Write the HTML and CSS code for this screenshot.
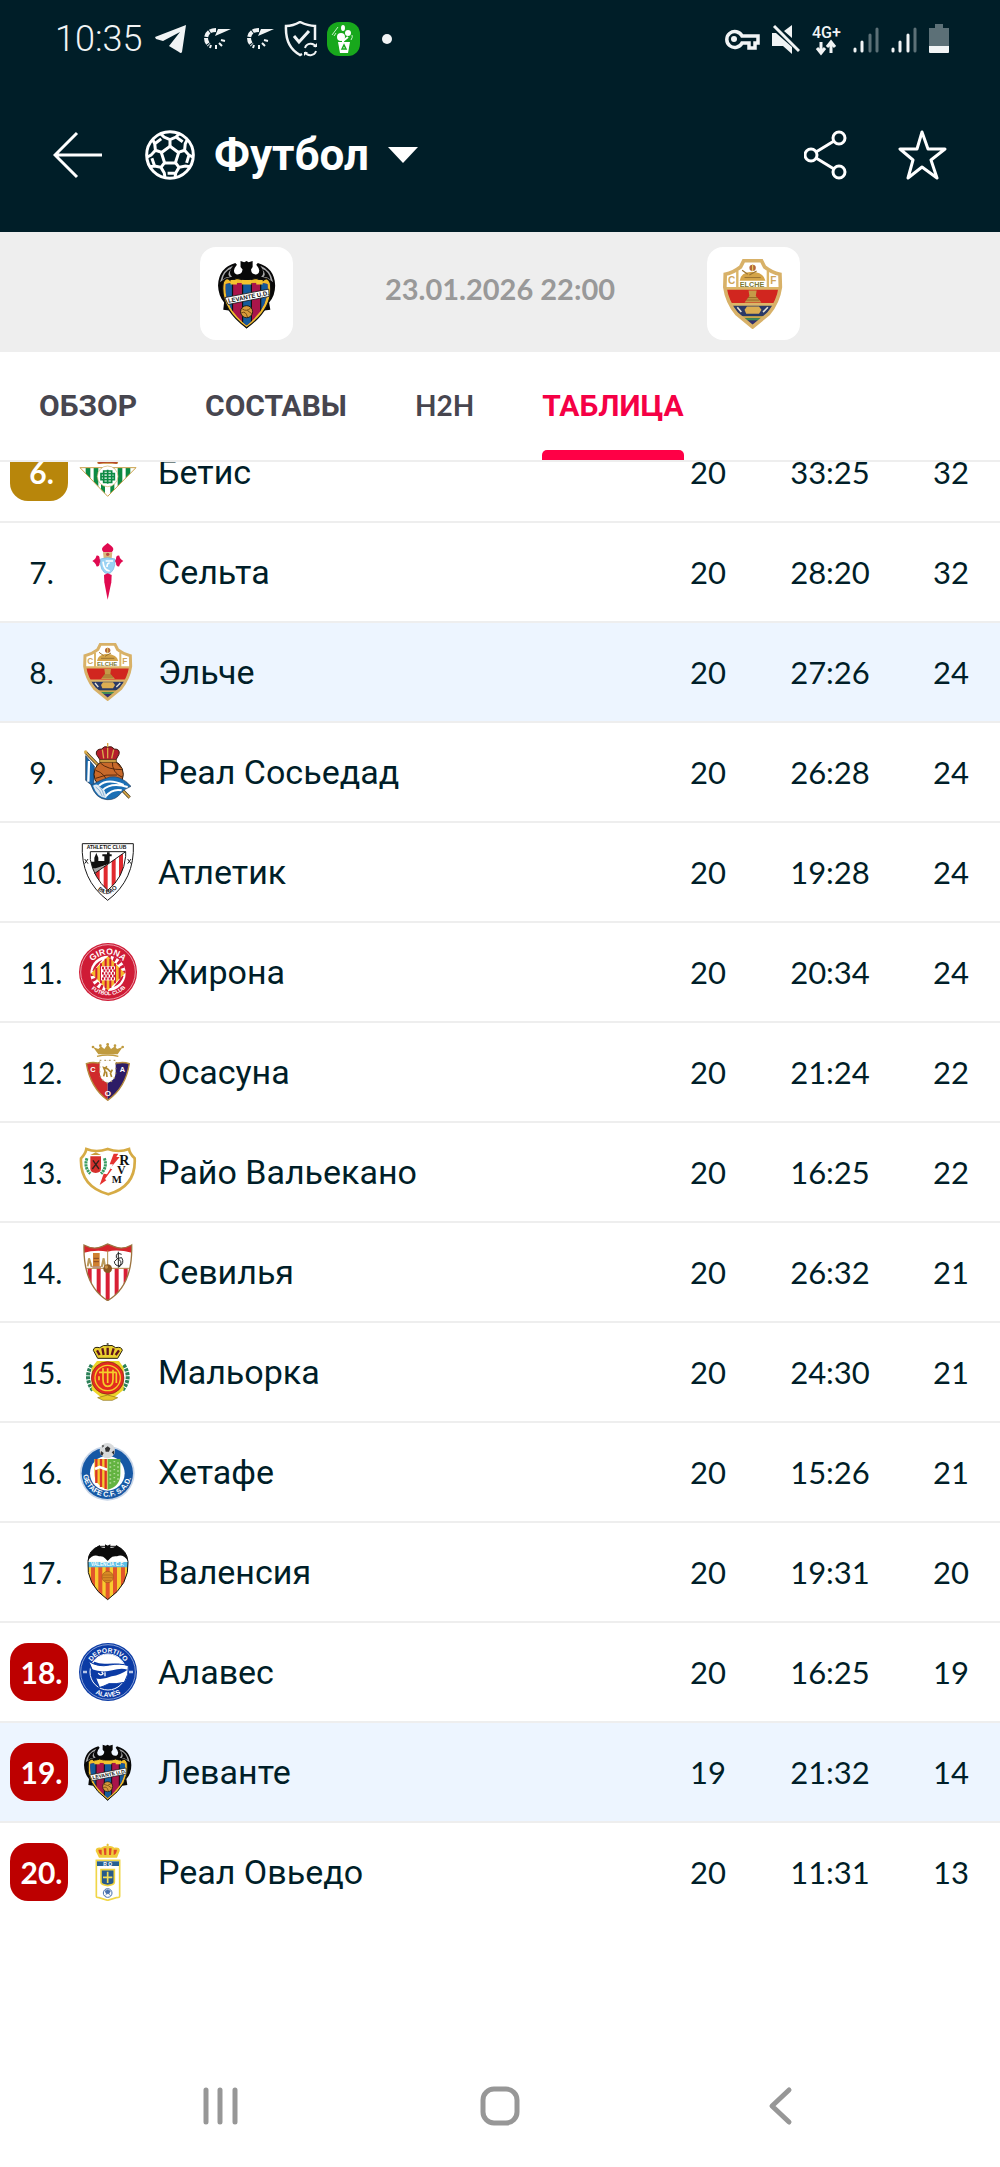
FILE: index.html
```html
<!DOCTYPE html>
<html lang="ru">
  <head>
    <meta charset="UTF-8">
    <meta name="viewport" content="width=device-width, initial-scale=1.0">
    <title>Леванте - Эльче: таблица</title>
    <link rel="stylesheet" href="styles.css">
  </head>
  <body>
    <header class="top">
      <div class="status">
        <span class="clock">10:35</span>
        <div class="notifications">
          <svg viewBox="0 0 33 36"><path d="M0 16L31 4L27 31Q26 33 24 31L14 25L25 11L8 20L1 18Z" fill="#f1f4f5"/></svg>
          <svg viewBox="0 0 33 36"><path d="M18 9Q9 9 8 17Q8 21 11 24" fill="none" stroke="#f1f4f5" stroke-width="4" stroke-dasharray="6 1"/><path d="M17 15L20 8H33L24 12Z" fill="#f1f4f5"/><path d="M13 24L12 27M18 24V28M21 22L24 25M23 19L27 20" stroke="#f1f4f5" stroke-width="2"/></svg>
          <svg viewBox="0 0 33 36"><path d="M18 9Q9 9 8 17Q8 21 11 24" fill="none" stroke="#f1f4f5" stroke-width="4" stroke-dasharray="6 1"/><path d="M17 15L20 8H33L24 12Z" fill="#f1f4f5"/><path d="M13 24L12 27M18 24V28M21 22L24 25M23 19L27 20" stroke="#f1f4f5" stroke-width="2"/></svg>
          <svg viewBox="0 0 33 36"><path d="M18 33L16 34Q1 26 2 5Q9 5 16 1Q24 5 31 5V19" fill="none" stroke="#f1f4f5" stroke-width="2.5"/><path d="M10 15L15 21L25 10" fill="none" stroke="#f1f4f5" stroke-width="3"/><path d="M21 27A6 6 0 0 1 32 26M32 30A6 6 0 0 1 21 31" fill="none" stroke="#f1f4f5" stroke-width="2"/><path d="M29 26H33V22ZM24 31H20V35Z" fill="#f1f4f5"/></svg>
          <svg viewBox="0 0 33 36"><rect y="1" width="33" height="34" rx="12" fill="#18a81c"/><path d="M11 21H23L21 32H13Z" fill="#fff"/><path d="M16 22V14M16 20L21 16" stroke="#fff" stroke-width="2"/><circle cx="14" cy="16" r="4" fill="#fff"/><circle cx="21" cy="12" r="3" fill="#fff"/><ellipse cx="16" cy="7" rx="2" ry="3" fill="#fff"/><path d="M5 14L11 6M7 15L9 12M24 19Q26 16 25 14" fill="none" stroke="#c9f2c9" stroke-width="1"/><path d="M15 28L17 24L19 28Z" fill="none" stroke="#18a81c" stroke-width="1.5"/></svg>
          <svg viewBox="0 0 33 36"><circle cx="17" cy="18" r="5" fill="#f1f4f5"/></svg>
        </div>
        <div class="system">
          <svg width="35" height="36" viewBox="0 0 35 36"><path d="M17 15H33V22H30V27H24V22H17A8 8 0 1 1 17 15Z" fill="none" stroke="#f1f4f5" stroke-width="3.5"/><circle cx="9" cy="18" r="3" fill="#f1f4f5"/></svg>
          <svg width="28" height="36" viewBox="0 0 28 36"><path d="M0 12H4L20 26V33L11 25H0ZM20 4V17L12 10Z" fill="#f1f4f5"/><path d="M2 5L27 30" stroke="#f1f4f5" stroke-width="3"/></svg>
          <svg width="29" height="36" viewBox="0 0 29 36"><text class="net" x="0" y="17">4G+</text><path d="M9 21V31M5 27L9 32L13 27M19 32V22M15 26L19 21L23 26" fill="none" stroke="#f1f4f5" stroke-width="3"/></svg>
          <svg width="26" height="36" viewBox="0 0 26 36"><path d="M2 28V30M9 21V30" stroke="#f1f4f5" stroke-width="3" stroke-linecap="round"/><path d="M17 14V30M24 8V30" stroke="#5c7077" stroke-width="3" stroke-linecap="round"/></svg>
          <svg width="26" height="36" viewBox="0 0 26 36"><path d="M2 28V30M9 21V30M17 14V30" stroke="#f1f4f5" stroke-width="3" stroke-linecap="round"/><path d="M24 8V30" stroke="#5c7077" stroke-width="3" stroke-linecap="round"/></svg>
          <svg width="20" height="36" viewBox="0 0 20 36"><path d="M6 3H14V7H20V26H0V7H6Z" fill="#5c7077"/><path d="M0 25H20V31Q20 32 19 32H1Q0 32 0 31Z" fill="#f1f4f5"/></svg>
        </div>
      </div>

      <div class="app-bar">
        <button class="icon-btn" type="button" aria-label="Назад">
          <svg width="49" height="50" viewBox="0 0 49 50"><path d="M49 25H2M24 3L2 25L24 47" fill="none" stroke="#fff" stroke-width="3"/></svg>
        </button>
        <button class="sport" type="button">
          <svg width="50" height="50" viewBox="-75 -75 150 150">
            <g fill="none" stroke="#fff" stroke-width="9">
              <circle r="70"/>
              <path d="M0 -26L26 -7L16 24H-16L-26 -7Z"/>
              <path d="M0 -26V-46M-28 -64L-18 -54L0 -46L18 -54L28 -64M18 -54L38 -40"/>
              <path d="M0 -26V-46M-28 -64L-18 -54L0 -46L18 -54L28 -64M18 -54L38 -40" transform="rotate(72)"/>
              <path d="M0 -26V-46M-28 -64L-18 -54L0 -46L18 -54L28 -64M18 -54L38 -40" transform="rotate(144)"/>
              <path d="M0 -26V-46M-28 -64L-18 -54L0 -46L18 -54L28 -64M18 -54L38 -40" transform="rotate(216)"/>
              <path d="M0 -26V-46M-28 -64L-18 -54L0 -46L18 -54L28 -64M18 -54L38 -40" transform="rotate(288)"/>
            </g>
          </svg>
          <span>Футбол</span>
          <svg width="30" height="16" viewBox="0 0 30 16"><path d="M0 0H30L15 16Z" fill="#fff"/></svg>
        </button>
        <div class="actions">
          <button class="icon-btn" type="button" aria-label="Поделиться">
            <svg width="43" height="50" viewBox="0 0 43 50"><g fill="none" stroke="#fff" stroke-width="3"><circle cx="7" cy="25" r="6"/><circle cx="35" cy="8" r="6"/><circle cx="35" cy="42" r="6"/><path d="M12 22L30 11M12 28L30 39"/></g></svg>
          </button>
          <button class="icon-btn" type="button" aria-label="В избранное">
            <svg width="49" height="50" viewBox="0 0 49 50"><path d="M24 2L30 19H47L33 30L39 48L24 37L10 48L15 30L2 19H19Z" fill="none" stroke="#fff" stroke-width="3" stroke-linejoin="round"/></svg>
          </button>
        </div>
      </div>
    </header>

    <section class="match">
      <a class="team-box" href="#" aria-label="Леванте">
        <svg viewBox="0 0 174 174">
          <g id="levante">
            <clipPath id="lev-clip"><path d="M34 62Q60 56 86 62Q112 56 138 62Q144 120 86 165Q28 120 34 62Z"/></clipPath>
            <path d="M58 10Q16 22 15 66Q16 92 30 108L28 126L42 128L86 173L130 128L145 126L142 108Q157 92 157 66Q156 22 114 10L110 14Q124 30 112 38Q98 40 97 26L101 20L101 5L91 8L86 5L80 8L71 5L71 20L76 26Q74 40 60 38Q48 30 62 14Z" fill="#080808"/>
            <path d="M20 58Q26 26 52 17Q38 34 50 44Q32 46 20 58ZM152 58Q146 26 120 17Q134 34 122 44Q140 46 152 58Z" fill="#a9a9ab"/>
            <path d="M26 52Q30 30 48 24Q36 38 44 44Q34 44 26 52ZM146 52Q142 30 124 24Q136 38 128 44Q138 44 146 52Z" fill="#080808"/>
            <path d="M28 58Q36 42 46 54L62 48L86 54L110 48L126 54Q138 42 145 60Q154 122 86 171Q18 122 28 58Z" fill="#f0bd2c" stroke="#111" stroke-width="3"/>
            <g clip-path="url(#lev-clip)">
              <rect x="20" y="50" width="130" height="120" fill="#a9154a"/>
              <path d="M20 50h31v120H20zM76 50h22v120H76zM121 50h30v120h-30z" fill="#145b9c"/>
              <path d="M51 50v120M76 50v120M98 50v120M121 50v120" stroke="#111" stroke-width="3"/>
            </g>
            <path d="M46 58H62M74 58H98M110 58H126" stroke="#f5c32f" stroke-width="11"/>
            <path d="M32 96L141 75L142 93L40 113Z" fill="#fff" stroke="#111" stroke-width="2"/>
            <text class="crest-text" x="41" y="109" font-size="15" transform="rotate(-11 41 109)">LEVANTE U.D.</text>
            <circle cx="86" cy="131" r="15" fill="#d79a3b" stroke="#111" stroke-width="2"/>
            <path d="M75 124Q86 132 96 122M73 134Q84 128 88 144M88 128L99 136" fill="none" stroke="#5c3909" stroke-width="2"/>
          </g>
        </svg>
      </a>
      <time datetime="2026-01-23T22:00">23.01.2026 22:00</time>
      <a class="team-box" href="#" aria-label="Эльче">
        <svg viewBox="0 0 174 174">
          <g id="elche">
            <clipPath id="elc-clip"><path d="M20 74H152Q146 108 122 136L86 170L50 136Q26 108 20 74Z"/></clipPath>
            <path d="M64 4H108L116 20Q134 34 154 38L155 70Q150 106 126 136L86 169L46 136Q22 106 17 70L18 38Q38 34 56 20Z" fill="#fff"/>
            <g clip-path="url(#elc-clip)">
              <rect y="70" width="174" height="42" fill="#d1261f"/>
              <rect y="112" width="174" height="60" fill="#2b3a66"/>
              <rect y="142" width="174" height="5" fill="#c9a849"/>
              <rect y="147" width="174" height="6" fill="#3e8b56"/>
              <rect y="153" width="174" height="20" fill="#33306e"/>
              <path d="M66 108L78 92L76 78H96L94 92L108 108Z" fill="#c59a48"/>
              <path d="M74 96H98M70 102H102" stroke="#8b5a1f" stroke-width="2"/>
              <path d="M66 126L72 118H102L108 126L102 136H70Z" fill="#dcae52"/>
              <path d="M48 120L58 132M124 120L112 132" stroke="#e5e1d5" stroke-width="4"/>
            </g>
            <path d="M18 73H154M32 113H140" stroke="#dcb668" stroke-width="7"/>
            <path d="M48 30V72M124 30V72" stroke="#dcb668" stroke-width="6"/>
            <path d="M54 54Q56 34 84 32Q114 34 118 54Z" fill="#d4a449"/>
            <path d="M60 28L74 38M78 40L96 30M66 46H106" stroke="#9c7432" stroke-width="3"/>
            <circle cx="86" cy="22" r="8" fill="#b5673a"/>
            <path d="M86 14V30" stroke="#e4c75d" stroke-width="3"/>
            <text class="crest-text olive" x="54" y="69" font-size="18">ELCHE</text>
            <text class="crest-text gold" x="25" y="63" font-size="25">C</text>
            <text class="crest-text gold" x="130" y="63" font-size="25">F</text>
            <path d="M64 4H108L116 20Q134 34 154 38L155 70Q150 106 126 136L86 169L46 136Q22 106 17 70L18 38Q38 34 56 20Z" fill="none" stroke="#d8b168" stroke-width="9"/>
          </g>
        </svg>
      </a>
    </section>

    <nav class="tabs">
      <a href="#">ОБЗОР</a>
      <a href="#">СОСТАВЫ</a>
      <a class="latin" href="#">H2H</a>
      <a class="active" href="#" aria-current="page">ТАБЛИЦА</a>
    </nav>

    <main class="standings">
      <table>
        <tbody>
          <tr>
            <td class="rank"><span class="badge europe">6.</span></td>
            <td class="crest">
              <svg viewBox="0 0 174 174">
                <clipPath id="bet-clip"><path d="M3 74H171L86 160Z"/></clipPath>
                <path d="M56 62L48 36L66 44L86 24L106 44L124 36L116 62Z" fill="#c98a2b"/>
                <path d="M58 60Q86 52 114 60" fill="none" stroke="#b5482a" stroke-width="6"/>
                <g clip-path="url(#bet-clip)">
                  <path d="M0 70H174V162H0Z" fill="#fff"/>
                  <path d="M20 70h14v90H20zM44 70h14v90H44zM66 70h12v90H66zM94 70h12v90H94zM116 70h14v90h-14zM140 70h14v90h-14z" fill="#0b8a43"/>
                </g>
                <path d="M3 74H171L86 160Z" fill="none" stroke="#c9a04a" stroke-width="3"/>
                <circle cx="86" cy="100" r="31" fill="#fff" stroke="#cdb06a" stroke-width="2"/>
                <path d="M74 84H98V118H74ZM66 92H106V110H66ZM66 101H106M86 80V122" fill="none" stroke="#0b8a43" stroke-width="5"/>
              </svg>
            </td>
            <td class="name">Бетис</td>
            <td class="games">20</td>
            <td class="goals">33:25</td>
            <td class="points">32</td>
          </tr>
          <tr>
            <td class="rank"><span class="badge">7.</span></td>
            <td class="crest">
              <svg viewBox="0 0 174 174">
                <path d="M86 0L98 10Q108 18 98 28H74Q64 18 74 10Z" fill="#e00a50"/>
                <path d="M40 54Q52 46 52 38Q62 36 62 48L66 54L62 60Q62 72 52 70Q52 62 40 54ZM133 54Q121 46 121 38Q111 36 111 48L107 54L111 60Q111 72 121 70Q121 62 133 54Z" fill="#e00a50"/>
                <path d="M72 28H100L98 46H74Z" fill="#d9b77a"/><circle cx="86" cy="34" r="5" fill="#b8483c"/>
                <path d="M64 48Q86 40 108 48Q110 86 86 94Q62 86 64 48Z" fill="#9ad2f4" stroke="#72b5e0" stroke-width="2"/>
                <path d="M72 56Q74 82 92 84M80 54H102M92 60Q84 60 84 72" fill="none" stroke="#fff" stroke-width="5"/>
                <path d="M75 96L86 91L98 96L97 118L86 170L76 118Z" fill="#e00a50"/>
              </svg>
            </td>
            <td class="name">Сельта</td>
            <td class="games">20</td>
            <td class="goals">28:20</td>
            <td class="points">32</td>
          </tr>
          <tr class="current">
            <td class="rank"><span class="badge">8.</span></td>
            <td class="crest"><svg viewBox="0 0 174 174"><use href="#elche"/></svg></td>
            <td class="name">Эльче</td>
            <td class="games">20</td>
            <td class="goals">27:26</td>
            <td class="points">24</td>
          </tr>
          <tr>
            <td class="rank"><span class="badge">9.</span></td>
            <td class="crest">
              <svg viewBox="0 0 174 174">
                <path d="M20 28L152 164" stroke="#3c2c10" stroke-width="9"/>
                <path d="M20 28L152 164" stroke="#d9aa4a" stroke-width="5"/>
                <circle cx="20" cy="27" r="5" fill="#d9aa4a"/>
                <path d="M20 38L46 70L44 132L20 112Z" fill="#1768ae" stroke="#1a2a44" stroke-width="2"/>
                <path d="M30 54L28 116" stroke="#fff" stroke-width="7"/>
                <circle cx="89" cy="94" r="44" fill="#c8692a" stroke="#2c1a0c" stroke-width="3"/>
                <path d="M50 82Q80 90 92 132M64 60Q84 80 130 80M100 54Q98 90 132 104M50 106Q80 92 114 96M112 58L126 74" fill="none" stroke="#5b2a0e" stroke-width="3"/>
                <path d="M64 52L52 34Q50 18 68 18Q76 8 86 12Q98 8 106 18Q124 18 120 34L110 52Z" fill="#b41e2c" stroke="#3c1a10" stroke-width="3"/>
                <path d="M86 0V12M70 20L74 46M86 14V46M104 20L98 46" stroke="#d9aa4a" stroke-width="4"/>
                <path d="M62 50H112V58H62Z" fill="#d9aa4a" stroke="#3c2c10" stroke-width="2"/>
                <path d="M36 126Q62 112 92 102Q126 96 156 130Q136 138 126 150Q110 172 84 170Q50 168 36 126Z" fill="#1b6fb5" stroke="#27405e" stroke-width="2"/>
                <path d="M60 128Q86 104 134 126M70 142Q96 116 146 132M80 160Q100 136 128 142" fill="none" stroke="#fff" stroke-width="6"/>
                <path d="M42 128Q56 118 66 134Q82 140 82 166Q54 162 42 128Z" fill="#dfeaf3"/>
                <path d="M50 132Q62 138 70 160M60 128Q72 142 76 160" fill="none" stroke="#5f93c3" stroke-width="2"/>
              </svg>
            </td>
            <td class="name">Реал Сосьедад</td>
            <td class="games">20</td>
            <td class="goals">26:28</td>
            <td class="points">24</td>
          </tr>
          <tr>
            <td class="rank"><span class="badge">10.</span></td>
            <td class="crest">
              <svg viewBox="0 0 174 174">
                <clipPath id="ath-clip"><path d="M34 26H140V40Q134 104 86 142Q44 104 34 50Z"/></clipPath>
                <path d="M10 2H163Q168 110 86 172Q4 110 10 2Z" fill="#fff" stroke="#1a1a1a" stroke-width="3"/>
                <g clip-path="url(#ath-clip)">
                  <path d="M30 70H90L46 92Z" fill="#a5a5a5"/>
                  <path d="M36 56H46V44L52 30L58 44V54H76V40H70V34H84V28H92V34H98V40H92V62L50 76H36Z" fill="#111"/>
                  <path d="M140 26L44 92L60 150H150Z" fill="#fff"/>
                  <path d="M50 88L62 80V130H50ZM74 72L86 64V150H74ZM98 55L110 47V130H98ZM120 40L132 32V120H120Z" fill="#e02a2f"/>
                </g>
                <path d="M34 26H140V40Q134 104 86 142Q44 104 34 50ZM140 26L46 92" fill="none" stroke="#1a1a1a" stroke-width="3"/>
                <path d="M17 48L27 62M27 48L17 62M146 48L156 62M156 48L146 62" stroke="#222" stroke-width="3"/>
                <text class="crest-text" x="23" y="19" font-size="15">ATHLETIC CLUB</text>
                <path id="ath-arc" d="M44 126Q86 186 132 112" fill="none"/>
                <text class="crest-text" font-size="18"><textPath href="#ath-arc" startOffset="18">BILBAO</textPath></text>
              </svg>
            </td>
            <td class="name">Атлетик</td>
            <td class="games">20</td>
            <td class="goals">19:28</td>
            <td class="points">24</td>
          </tr>
          <tr>
            <td class="rank"><span class="badge">11.</span></td>
            <td class="crest">
              <svg viewBox="0 0 174 174">
                <circle cx="87" cy="87" r="87" fill="#cf1b36"/>
                <circle cx="87" cy="87" r="82" fill="none" stroke="#f7dfe2" stroke-width="2"/>
                <circle cx="87" cy="91" r="53" fill="#fff"/>
                <path d="M87 45A46 46 0 0 1 133 91" fill="none" stroke="#cf1b36" stroke-width="14" stroke-dasharray="8 8"/>
                <path d="M87 137A46 46 0 0 1 41 91" fill="none" stroke="#cf1b36" stroke-width="14" stroke-dasharray="8 8"/>
                <path d="M40 84Q46 60 70 50L44 84ZM134 98Q128 122 104 132L130 98Z" fill="#cf1b36"/>
                <path d="M87 40L138 91L87 142L36 91Z" fill="#f6b62b"/>
                <path d="M52 75V107M66 61V121M80 47V135M94 47V135M108 61V121M122 75V107" stroke="#cf1b36" stroke-width="6"/>
                <rect x="66" y="70" width="42" height="42" fill="#fff"/>
                <path d="M69 75H108M73 83H108M69 91H108M73 99H108M69 107H108" stroke="#cf1b36" stroke-width="7" stroke-dasharray="6 4"/>
                <path id="gir-top" d="M33 66A62 62 0 0 1 141 66" fill="none"/>
                <path id="gir-bottom" d="M29 130A76 76 0 0 0 145 130" fill="none"/>
                <text class="crest-text white" font-size="26"><textPath href="#gir-top" startOffset="13">GIRONA</textPath></text>
                <text class="crest-text white" font-size="16"><textPath href="#gir-bottom" startOffset="11">FUTBOL CLUB</textPath></text>
              </svg>
            </td>
            <td class="name">Жирона</td>
            <td class="games">20</td>
            <td class="goals">20:34</td>
            <td class="points">24</td>
          </tr>
          <tr>
            <td class="rank"><span class="badge">12.</span></td>
            <td class="crest">
              <svg viewBox="0 0 174 174">
                <path d="M58 34L42 12L58 18L66 10L76 18L86 4L96 18L108 10L114 18L131 12L116 34Z" fill="#c09b3f"/>
                <path d="M54 40Q86 32 118 40" fill="none" stroke="#c09b3f" stroke-width="4"/>
                <g fill="#c09b3f"><circle cx="42" cy="12" r="4"/><circle cx="64" cy="8" r="4"/><circle cx="86" cy="4" r="4"/><circle cx="108" cy="8" r="4"/><circle cx="131" cy="12" r="4"/></g>
                <path d="M22 62Q40 56 56 60L86 54V172Q34 134 22 62Z" fill="#cf2a2c"/>
                <path d="M151 62Q134 56 116 60L86 54V172Q140 134 151 62Z" fill="#2d1c66"/>
                <path d="M22 62Q40 56 56 60L86 54L116 60Q134 56 151 62Q140 134 86 172Q34 134 22 62Z" fill="none" stroke="#b78c3e" stroke-width="4"/>
                <path d="M62 52H110V86Q110 112 86 120Q62 112 62 86Z" fill="#fff"/>
                <path d="M62 52H110V86Q110 112 86 120Q62 112 62 86Z" fill="none" stroke="#b5a06e" stroke-width="4" stroke-dasharray="5 9"/>
                <path d="M74 100L78 84L74 74L86 78L96 88L100 80M82 86L84 102M94 90L98 102M78 76L84 70" fill="none" stroke="#b0882e" stroke-width="5"/>
                <text class="crest-text white" x="34" y="88" font-size="22">C</text>
                <text class="crest-text white" x="122" y="88" font-size="22">A</text>
                <text class="crest-text white" x="77" y="159" font-size="24">O</text>
              </svg>
            </td>
            <td class="name">Осасуна</td>
            <td class="games">20</td>
            <td class="goals">21:24</td>
            <td class="points">22</td>
          </tr>
          <tr>
            <td class="rank"><span class="badge">13.</span></td>
            <td class="crest">
              <svg viewBox="0 0 174 174">
                <path d="M22 18Q52 30 86 18Q120 30 150 18Q152 32 167 46Q172 130 88 154Q2 130 6 46Q20 32 22 18Z" fill="#fff" stroke="#d6ab45" stroke-width="8"/>
                <path d="M24 46Q14 72 34 92M76 46Q86 72 66 92" fill="none" stroke="#379b60" stroke-width="9" stroke-dasharray="7 2"/>
                <path d="M34 40H66V78Q66 88 50 90Q34 88 34 78Z" fill="#d5302c"/>
                <path d="M40 78L60 52M42 52L60 78" stroke="#33221c" stroke-width="4"/>
                <path d="M34 36L50 28L66 36Z" fill="#c99d3d"/>
                <path d="M104 32L92 64L102 64L84 94L74 92L62 126L82 112L78 108L100 78L92 78L122 42L112 42L118 32Z" fill="#e5322f"/>
                <text class="crest-serif" x="121" y="66" font-size="42">R</text>
                <text class="crest-serif" x="114" y="92" font-size="36">V</text>
                <text class="crest-serif" x="98" y="120" font-size="32">M</text>
              </svg>
            </td>
            <td class="name">Райо Вальекано</td>
            <td class="games">20</td>
            <td class="goals">16:25</td>
            <td class="points">22</td>
          </tr>
          <tr>
            <td class="rank"><span class="badge">14.</span></td>
            <td class="crest">
              <svg viewBox="0 0 174 174">
                <clipPath id="sev-clip"><path d="M15 6Q44 22 70 10L86 3L104 10Q130 22 158 6Q162 128 86 173Q12 128 15 6Z"/></clipPath>
                <g clip-path="url(#sev-clip)">
                  <path d="M0 0H174V174H0Z" fill="#fff"/>
                  <path d="M0 0H174V34Q120 16 86 26Q44 18 0 34Z" fill="#d6252c"/>
                  <path d="M26 76h12v98H26zM53 76h12v98H53zM80 76h12v98H80zM107 76h12v98h-12zM134 76h12v98h-12z" fill="#d81f35"/>
                  <path d="M15 76H158M86 22V76" stroke="#b48b4d" stroke-width="3"/>
                </g>
                <path d="M15 6Q44 22 70 10L86 3L104 10Q130 22 158 6Q162 128 86 173Q12 128 15 6Z" fill="none" stroke="#9c7440" stroke-width="4"/>
                <path d="M42 30H62V70H42Z" fill="#cf8030"/>
                <path d="M26 70L30 46L38 72M68 72L74 46L78 70" fill="none" stroke="#bb9a5b" stroke-width="6"/>
                <path d="M44 46H60M44 56H60M40 72H66" stroke="#8b4923" stroke-width="3"/>
                <path d="M128 34Q110 26 112 44Q134 56 122 68Q108 70 106 56Q116 42 128 44Q138 60 120 72M118 26V74" fill="none" stroke="#242424" stroke-width="3"/>
                <circle cx="86" cy="77" r="13" fill="#8b5720"/><circle cx="82" cy="72" r="5" fill="#c69146"/>
              </svg>
            </td>
            <td class="name">Севилья</td>
            <td class="games">20</td>
            <td class="goals">26:32</td>
            <td class="points">21</td>
          </tr>
          <tr>
            <td class="rank"><span class="badge">15.</span></td>
            <td class="crest">
              <svg viewBox="0 0 174 174">
                <path d="M38 66Q14 104 42 142M134 66Q160 104 130 142" fill="none" stroke="#2b8158" stroke-width="12" stroke-dasharray="9 3"/>
                <path d="M54 54H120L134 74V140L110 160Q98 174 86 168Q74 176 62 160L38 140V74Z" fill="#ecd529"/>
                <path d="M56 164L86 156L116 164L100 172H72Z" fill="#e9c82a" stroke="#8e7318" stroke-width="2"/>
                <circle cx="86" cy="105" r="49" fill="#e32b20" stroke="#7a2c14" stroke-width="2"/>
                <circle cx="86" cy="105" r="38" fill="none" stroke="#f5cf28" stroke-width="4"/>
                <path d="M60 88H112M72 76V108Q72 130 86 130Q102 130 102 108V80M86 76V120M60 100V112M112 88V120" fill="none" stroke="#f5cf28" stroke-width="5"/>
                <path d="M56 46L43 22Q44 10 62 14Q74 4 86 8Q100 4 110 14Q128 10 130 22L116 46Z" fill="#ead02f" stroke="#27200c" stroke-width="3"/>
                <path d="M54 22L62 36M70 16L74 36M86 14V36M104 16L98 36M120 22L110 36" stroke="#5f141c" stroke-width="7"/>
                <path d="M86 0V8M82 3H90" stroke="#27200c" stroke-width="2"/>
              </svg>
            </td>
            <td class="name">Мальорка</td>
            <td class="games">20</td>
            <td class="goals">24:30</td>
            <td class="points">21</td>
          </tr>
          <tr>
            <td class="rank"><span class="badge">16.</span></td>
            <td class="crest">
              <svg viewBox="0 0 174 174">
                <circle cx="85" cy="91" r="82" fill="#c9d6e8"/>
                <circle cx="85" cy="91" r="77" fill="#1658a5"/>
                <circle cx="85" cy="91" r="52" fill="#fff"/>
                <path d="M46 48H86V140Q46 126 46 92Z" fill="#f5cb2d"/>
                <path d="M52 48V120M66 48V132M80 48V138" stroke="#d9342b" stroke-width="7"/>
                <path d="M48 78L62 72L84 80" fill="none" stroke="#fff" stroke-width="8"/>
                <path d="M86 48H124V92Q124 130 86 140Z" fill="#63b341"/>
                <path d="M94 58V128M106 54V124M117 58V112" stroke="#b4dc9b" stroke-width="5" stroke-dasharray="4 8"/>
                <circle cx="85" cy="23" r="23" fill="#d8dadb"/>
                <path d="M78 16L86 10L94 16L90 26H80ZM66 24L74 30L70 38L64 34ZM98 28L106 22L105 36ZM70 6L76 8L70 14Z" fill="#333"/>
                <path id="get-arc" d="M12 88A73 73 0 0 0 158 88" fill="none"/>
                <text class="crest-text white" font-size="22"><textPath href="#get-arc" startOffset="8">GETAFE C.F. S.A.D.</textPath></text>
              </svg>
            </td>
            <td class="name">Хетафе</td>
            <td class="games">20</td>
            <td class="goals">15:26</td>
            <td class="points">21</td>
          </tr>
          <tr>
            <td class="rank"><span class="badge">17.</span></td>
            <td class="crest">
              <svg viewBox="0 0 174 174">
                <clipPath id="val-clip"><path d="M27 56H147Q152 124 86 170Q20 124 27 56Z"/></clipPath>
                <path d="M27 56Q28 20 60 10H112Q144 20 147 56Z" fill="#fff"/>
                <g clip-path="url(#val-clip)">
                  <path d="M0 50H174V174H0Z" fill="#f8cb2e"/>
                  <path d="M36 60h12v110H36zM58 60h12v110H58zM80 60h12v110H80zM102 60h12v110h-12zM126 60h12v110h-12z" fill="#e2552b"/>
                  <path d="M0 56H174V73H0Z" fill="#5cbfe4"/>
                </g>
                <path d="M27 56Q28 20 60 10H112Q144 20 147 56Q152 124 86 170Q20 124 27 56Z" fill="none" stroke="#151515" stroke-width="3"/>
                <path d="M26 54Q28 24 62 6Q64 16 78 14V4L86 8L94 4V14Q108 16 112 6Q144 24 147 54Q132 32 114 40Q100 38 94 46L86 54L78 46Q72 38 60 40Q42 32 26 54Z" fill="#0b0b0b"/>
                <text class="crest-text white" x="36" y="70" font-size="14">VALENCIA C.F.</text>
                <circle cx="86" cy="102" r="17" fill="#d88a25" stroke="#9c5716" stroke-width="2"/>
                <path d="M72 96H100M71 104H101M76 112H96" stroke="#a8641a" stroke-width="2"/>
              </svg>
            </td>
            <td class="name">Валенсия</td>
            <td class="games">20</td>
            <td class="goals">19:31</td>
            <td class="points">20</td>
          </tr>
          <tr>
            <td class="rank"><span class="badge relegation">18.</span></td>
            <td class="crest">
              <svg viewBox="0 0 174 174">
                <circle cx="87" cy="87" r="87" fill="#0b3ba5"/>
                <circle cx="87" cy="87" r="82" fill="none" stroke="#c4d0ec" stroke-width="2"/>
                <circle cx="87" cy="87" r="54" fill="none" stroke="#fff" stroke-width="3"/>
                <path d="M37 67A54 54 0 0 1 136 65Q112 60 86 62Q62 64 46 56Z" fill="#fff"/>
                <path d="M28 54Q56 74 92 66Q124 60 148 68Q150 96 136 118Q110 124 90 122Q74 130 60 134Z" fill="#fff" stroke="#0b3ba5" stroke-width="3"/>
                <path d="M36 78Q70 90 100 82Q126 74 146 80Q124 96 98 100Q70 112 48 106Z" fill="#0b3ba5"/>
                <path d="M58 90Q64 100 72 92L68 86M78 88V100" fill="none" stroke="#fff" stroke-width="4"/>
                <path d="M28 54L62 136" stroke="#0b3ba5" stroke-width="4"/>
                <path d="M12 87H24M150 87H162" stroke="#b7c6e8" stroke-width="7"/>
                <path id="ala-top" d="M36 58A59 59 0 0 1 138 58" fill="none"/>
                <path id="ala-bottom" d="M36 142A75 75 0 0 0 138 142" fill="none"/>
                <text class="crest-text white" font-size="20"><textPath href="#ala-top" startOffset="3">DEPORTIVO</textPath></text>
                <text class="crest-text white" font-size="20"><textPath href="#ala-bottom" startOffset="16">ALAVÉS</textPath></text>
              </svg>
            </td>
            <td class="name">Алавес</td>
            <td class="games">20</td>
            <td class="goals">16:25</td>
            <td class="points">19</td>
          </tr>
          <tr class="current">
            <td class="rank"><span class="badge relegation">19.</span></td>
            <td class="crest"><svg viewBox="0 0 174 174"><use href="#levante"/></svg></td>
            <td class="name">Леванте</td>
            <td class="games">19</td>
            <td class="goals">21:32</td>
            <td class="points">14</td>
          </tr>
          <tr>
            <td class="rank"><span class="badge relegation">20.</span></td>
            <td class="crest">
              <svg viewBox="0 0 174 174">
                <path d="M60 44L50 24Q50 12 66 14Q76 6 86 10Q98 6 106 14Q124 12 122 24L114 44Z" fill="#f0cb3a"/>
                <path d="M86 2V10M82 6H90" stroke="#e3bd2d" stroke-width="3"/>
                <path d="M58 20Q60 34 68 36V20ZM74 16H82V36H76ZM90 16H98L96 36H90ZM104 20L104 36Q112 34 114 20Z" fill="#df4a27"/>
                <path d="M52 52H122V160Q122 164 112 164L86 172L60 164Q52 164 52 160Z" fill="#fff" stroke="#f0d648" stroke-width="5"/>
                <path d="M54 55H120V69H54Z" fill="#286092"/>
                <text class="crest-text white" x="73" y="68" font-size="15">R O</text>
                <path d="M66 80H106V118Q106 126 86 128Q66 126 66 118Z" fill="#275a8c" stroke="#efd340" stroke-width="5"/>
                <path d="M86 86V120M72 103H100" stroke="#f4dc55" stroke-width="5"/>
                <circle cx="86" cy="150" r="13" fill="#fff" stroke="#4770ac" stroke-width="3"/>
                <path d="M78 144L86 140L94 144L90 152H82ZM78 158L84 152M94 158L90 152" fill="#4770ac" stroke="#4770ac" stroke-width="2"/>
              </svg>
            </td>
            <td class="name">Реал Овьедо</td>
            <td class="games">20</td>
            <td class="goals">11:31</td>
            <td class="points">13</td>
          </tr>
        </tbody>
      </table>
    </main>

    <footer class="nav-bar">
      <button type="button" aria-label="Последние"><svg width="40" height="40" viewBox="0 0 40 40"><path d="M6 4V36M20 4V36M35 4V36" stroke="#979797" stroke-width="5" stroke-linecap="round"/></svg></button>
      <button type="button" aria-label="Домой"><svg width="40" height="40" viewBox="0 0 40 40"><rect x="3" y="3" width="34" height="34" rx="11" fill="none" stroke="#979797" stroke-width="5"/></svg></button>
      <button type="button" aria-label="Назад"><svg width="40" height="40" viewBox="0 0 40 40"><path d="M29 4L12 20L29 36" fill="none" stroke="#979797" stroke-width="5" stroke-linecap="round" stroke-linejoin="round"/></svg></button>
    </footer>
  </body>
</html>
```
FILE: styles.css
```css
* {
  box-sizing: border-box;
}
body {
  margin: 0;
  min-height: 100vh;
  display: flex;
  flex-direction: column;
  font-family: Roboto, sans-serif;
  background-color: #fff;
  color: #001e28;
}
svg {
  display: block;
  flex: none;
}
a {
  color: inherit;
  text-decoration: none;
}
button {
  background: none;
  border: none;
  padding: 0;
  color: inherit;
  font-family: inherit;
  cursor: pointer;
}

/* header */
.top {
  background-color: #001e28;
  color: #fff;
}
.status {
  display: flex;
  align-items: center;
  height: 78px;
  padding: 0 51px 0 55px;
}
.clock {
  width: 100px;
  font-size: 36px;
  font-weight: 300;
  color: #f1f4f5;
}
.notifications {
  display: flex;
  gap: 10px;
}
.notifications svg {
  width: 33px;
  height: 36px;
}
.system {
  display: flex;
  gap: 12px;
  margin-left: auto;
}
.net {
  font-size: 16px;
  font-weight: 500;
  fill: #f1f4f5;
}
.app-bar {
  display: flex;
  align-items: center;
  height: 154px;
  padding: 0 53px;
}
.sport {
  display: flex;
  align-items: center;
  gap: 19px;
  margin-left: 43px;
  font-size: 44px;
  font-weight: 700;
}
.actions {
  display: flex;
  gap: 51px;
  margin-left: auto;
}

/* teams and date */
.match {
  display: flex;
  align-items: center;
  justify-content: space-between;
  height: 120px;
  padding: 3px 20% 0;
  background-color: #eee;
}
.match time {
  font-family: Lato, sans-serif;
  font-size: 29px;
  line-height: 29px;
  font-weight: 700;
  padding-bottom: 10px;
  color: #999;
}
.team-box {
  display: flex;
  align-items: center;
  justify-content: center;
  width: 93px;
  height: 93px;
  border-radius: 16px;
  background-color: #fff;
}
.team-box svg {
  width: 70px;
  height: 70px;
}

.tabs {
  display: flex;
  gap: 68px;
  height: 110px;
  padding-left: 39px;
  border-bottom: 2px solid #eee;
  font-size: 30px;
  font-weight: 700;
  color: #47464f;
}
.tabs a {
  display: flex;
  align-items: center;
  height: 108px;
  padding-bottom: 2px;
}
.tabs .latin {
  font-family: Lato, sans-serif;
  font-size: 28px;
}
.tabs .active {
  position: relative;
  color: #f50045;
}
.tabs .active::after {
  content: "";
  position: absolute;
  left: 0;
  right: 0;
  bottom: 0;
  height: 10px;
  border-radius: 5px 5px 0 0;
  background-color: #ff0046;
}

/* standings, scrolled part of the way under the tabs */
.standings {
  flex: 1;
  overflow: hidden;
}
table {
  width: 100%;
  margin-top: -39px;
  border-collapse: separate;
  border-spacing: 0;
  table-layout: fixed;
}
td {
  height: 100px;
  padding: 0;
  border-bottom: 2px solid #eee;
  font-family: Lato, sans-serif;
  font-size: 31px;
  text-align: center;
}
tr:last-child td {
  border-bottom-color: transparent;
}
.current td {
  background-color: #edf5ff;
}
.rank {
  width: 68px;
  padding-left: 10px;
  font-size: 30px;
}
.badge {
  display: flex;
  align-items: center;
  justify-content: center;
  width: 58px;
  height: 58px;
  padding-left: 5px;
  border-radius: 18px;
}
.europe,
.relegation {
  color: #fff;
  font-weight: 700;
}
.europe {
  background-color: #b8860b;
}
.relegation {
  background-color: #bd0000;
}
.crest {
  width: 90px;
  padding-left: 11px;
}
.crest svg {
  width: 58px;
  height: 58px;
}
.name {
  font-family: Roboto, sans-serif;
  font-size: 34px;
  text-align: left;
}
.games {
  width: 100px;
}
.goals {
  width: 144px;
}
.points {
  width: 98px;
}
.crest-text {
  font-family: "Liberation Sans", sans-serif;
  font-weight: 700;
  fill: #111;
}
.crest-serif {
  font-family: "Liberation Serif", serif;
  font-weight: 700;
  fill: #111;
}
.white {
  fill: #fff;
}
.gold {
  fill: #cfa65a;
}
.olive {
  fill: #7c7a35;
}

/* phone buttons */
.nav-bar {
  display: flex;
  height: 122px;
  padding: 0 8%;
}
.nav-bar button {
  flex: 1;
  display: flex;
  align-items: center;
  justify-content: center;
}
```
